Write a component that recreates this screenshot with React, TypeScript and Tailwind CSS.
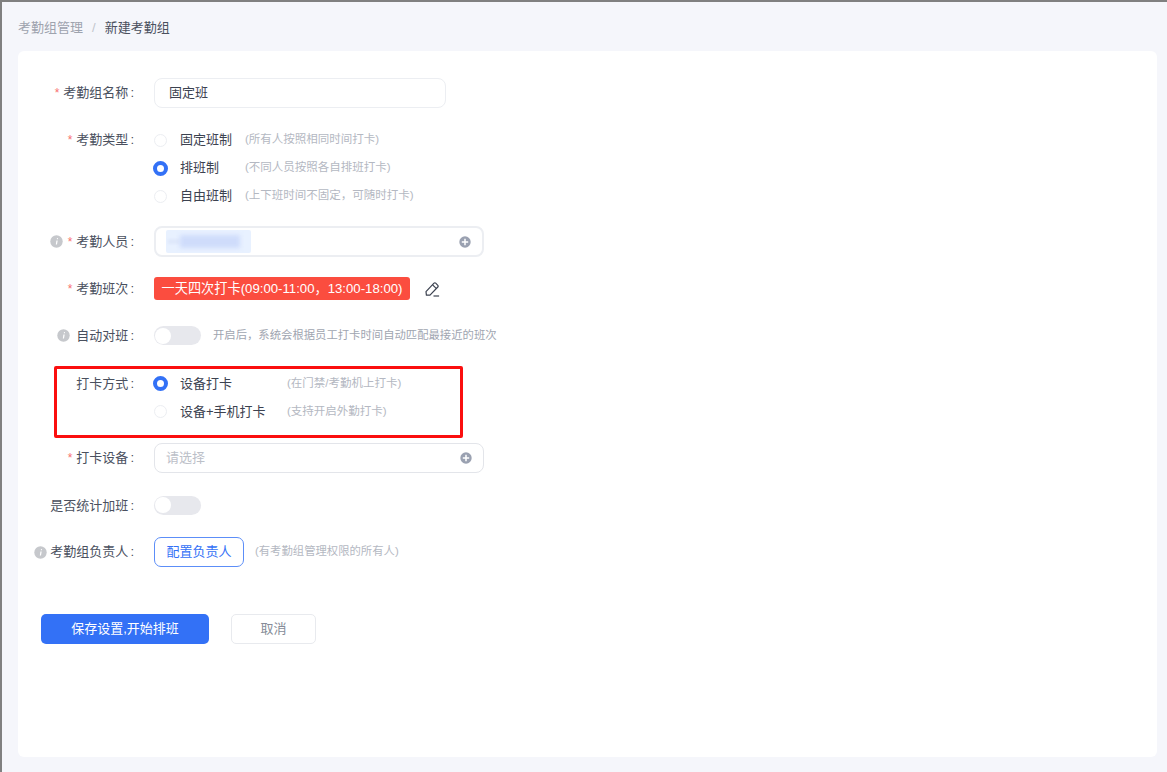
import React from "react";

function Info({ m = "mr-[5px]" }: { m?: string }) {
  return (
    <svg width="13" height="13" viewBox="0 0 13 13" className={`shrink-0 ${m}`}>
      <circle cx="6.5" cy="6.5" r="6.2" fill="#c6c8cc" />
      <path d="M7 3h.9v1.2H6.8zM6.4 5.4h1.3l-.7 4.2H5.8z" fill="#fff" />
    </svg>
  );
}

function Plus() {
  return (
    <svg width="12" height="12" viewBox="0 0 12 12" className="shrink-0">
      <circle cx="6" cy="6" r="5.7" fill="#9aa1b1" />
      <path d="M6 2.8v6.4M2.8 6h6.4" stroke="#fff" strokeWidth="1.5" />
    </svg>
  );
}

function Pencil() {
  return (
    <svg width="16" height="16" viewBox="0 0 16 16" fill="none" stroke="#3c4250" strokeWidth="1.2" className="ml-[14px] shrink-0" strokeLinejoin="round">
      <path d="M2 10.6 10 2.2a1.2 1.2 0 0 1 1.7 0l2.1 2.1a1.2 1.2 0 0 1 0 1.7L6 14.2H2.4z" />
      <path d="M8.6 3.8l3.6 3.6" />
      <path d="M9.5 15h5.6" />
    </svg>
  );
}

function Label({ text, star, info, infoM }: { text: string; star?: boolean; info?: boolean; infoM?: string }) {
  return (
    <div className="w-[118px] shrink-0 flex items-center justify-end text-[13px] text-[#4a505e] whitespace-nowrap">
      {info && <Info m={infoM} />}
      {star && <span className="text-[#f87171] text-[12px] mr-[4px] leading-none">*</span>}
      <span>{text}</span>
      <span className="ml-[2px] mr-[2px]">:</span>
    </div>
  );
}

function Radio({ on }: { on?: boolean }) {
  return on ? (
    <span className="shrink-0 w-[15px] h-[15px] rounded-full border-[4px] border-[#3371f6] bg-white" />
  ) : (
    <span className="shrink-0 w-[13px] h-[13px] mx-[1px] rounded-full border border-[#eceef2] bg-white" />
  );
}

function RadioRow({ on, text, hint, w }: { on?: boolean; text: string; hint: string; w: string }) {
  return (
    <div className="flex items-center h-[28px] -ml-[1px]">
      <Radio on={on} />
      <span className={`ml-[12px] text-[13px] text-[#3c4250] ${w}`}>{text}</span>
      <span className="text-[11.5px] text-[#b4b8c2]">{hint}</span>
    </div>
  );
}

function Toggle() {
  return (
    <div className="w-[47px] h-[19px] rounded-full bg-[#e7e8ed] flex items-center px-[1px]">
      <span className="w-[16px] h-[16px] rounded-full bg-white" />
    </div>
  );
}

export default function App() {
  return (
    <div className="w-[1167px] h-[772px] overflow-hidden flex flex-col bg-[#f5f6fb] border-t-2 border-l-2 border-[#808080] font-['Liberation_Sans','Noto_Sans_CJK_SC',sans-serif]">
      <div className="h-[49px] shrink-0 flex items-center pl-[16px] pt-[2px] text-[13px]">
        <span className="text-[#9ea3ae]">考勤组管理</span>
        <span className="mx-[9px] text-[#c2c5cc]">/</span>
        <span className="text-[#4a505e]">新建考勤组</span>
      </div>

      <div className="relative ml-[16px] mr-[10px] h-[706px] shrink-0 bg-white rounded-[6px] pt-[27px]">
        <div className="flex items-center">
          <Label text="考勤组名称" star />
          <div className="ml-[18px] w-[292px] h-[30px] flex items-center px-[14px] rounded-[8px] border border-[#eceef2] text-[13px] text-[#3c4250]">
            固定班
          </div>
        </div>

        <div className="flex items-start mt-[18px]">
          <div className="h-[28px] flex items-center">
            <Label text="考勤类型" star />
          </div>
          <div className="ml-[18px]">
            <RadioRow text="固定班制" hint="(所有人按照相同时间打卡)" w="w-[65px]" />
            <RadioRow on text="排班制" hint="(不同人员按照各自排班打卡)" w="w-[65px]" />
            <RadioRow text="自由班制" hint="(上下班时间不固定，可随时打卡)" w="w-[65px]" />
          </div>
        </div>

        <div className="flex items-center mt-[16px]">
          <Label text="考勤人员" star info />
          <div className="ml-[18px] w-[330px] h-[31px] flex items-center justify-between pl-[10px] pr-[11px] rounded-[8px] border-2 border-[#eceef2]">
            <div className="w-[85px] h-[23px] rounded-[2px] bg-[#e8f1ff] flex items-center overflow-hidden">
              <div className="ml-[2px] w-[12px] h-[5px] bg-[#dfe8fb] blur-[1px]" />
              <div className="w-[60px] h-[13px] bg-[#cfdcfb] blur-[2px]" />
            </div>
            <Plus />
          </div>
        </div>

        <div className="flex items-center mt-[20px]">
          <Label text="考勤班次" star />
          <div className="ml-[18px] h-[23px] w-[256px] flex items-center justify-center rounded-[3px] bg-[#fb4d3f] text-[13.2px] text-white whitespace-nowrap">
            一天四次打卡(09:00-11:00，13:00-18:00)
          </div>
          <Pencil />
        </div>

        <div className="flex items-center mt-[26px]">
          <Label text="自动对班" info infoM="mr-[6px]" />
          <div className="ml-[18px] flex items-center">
            <Toggle />
            <span className="ml-[12px] text-[11.35px] text-[#a0a5b0]">开启后，系统会根据员工打卡时间自动匹配最接近的班次</span>
          </div>
        </div>

        <div className="flex items-start mt-[24px]">
          <div className="h-[28px] flex items-center">
            <Label text="打卡方式" />
          </div>
          <div className="ml-[18px]">
            <RadioRow on text="设备打卡" hint="(在门禁/考勤机上打卡)" w="w-[107px]" />
            <RadioRow text="设备+手机打卡" hint="(支持开启外勤打卡)" w="w-[107px]" />
          </div>
        </div>

        <div className="flex items-center mt-[17px]">
          <Label text="打卡设备" star />
          <div className="ml-[18px] w-[330px] h-[30px] flex items-center justify-between pl-[11px] pr-[11px] rounded-[8px] border border-[#e3e5ea] text-[13px] text-[#bcc0c8]">
            请选择
            <Plus />
          </div>
        </div>

        <div className="flex items-center mt-[23px]">
          <Label text="是否统计加班" />
          <div className="ml-[18px]">
            <Toggle />
          </div>
        </div>

        <div className="flex items-center mt-[22px]">
          <Label text="考勤组负责人" info infoM="mr-[3px]" />
          <div className="ml-[18px] flex items-center">
            <div className="w-[90px] h-[30px] flex items-center justify-center rounded-[7px] border border-[#5c8ef8] text-[13px] text-[#3371f6]">
              配置负责人
            </div>
            <span className="ml-[11px] text-[11.35px] text-[#b4b8c2]">(有考勤组管理权限的所有人)</span>
          </div>
        </div>

        <div className="flex items-center mt-[47px] ml-[23px]">
          <div className="w-[168px] h-[30px] flex items-center justify-center rounded-[5px] bg-[#3371f6] text-[13px] text-white">
            保存设置,开始排班
          </div>
          <div className="ml-[22px] w-[85px] h-[30px] flex items-center justify-center rounded-[5px] border border-[#e8eaee] text-[13px] text-[#868c98]">
            取消
          </div>
        </div>

        <div className="absolute left-[36px] top-[315px] w-[409px] h-[72px] rounded-[2px] border-[3px] border-[#fb0f0f] pointer-events-none" />
      </div>
    </div>
  );
}
